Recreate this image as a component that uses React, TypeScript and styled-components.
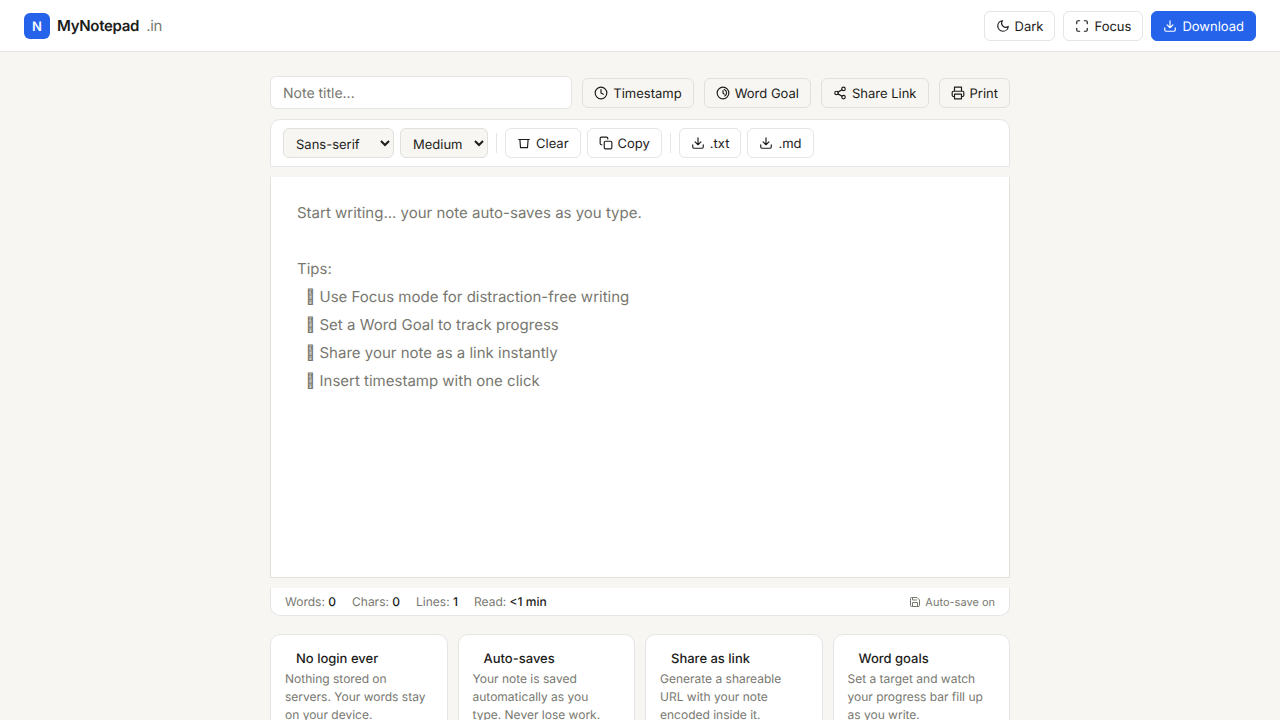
import React from "react";
import styled, { createGlobalStyle } from "styled-components";

const Global = createGlobalStyle`
  *, *::before, *::after { box-sizing: border-box; margin: 0; padding: 0; }
  body {
    background: #f7f6f2;
    color: #1c1c1a;
    font-family: Inter, "Liberation Sans", sans-serif;
    font-size: 14px;
    text-rendering: geometricPrecision;
  }
  button, input, select, textarea { font-family: inherit; color: inherit; text-rendering: inherit; }
`;

const Header = styled.header`
  display: flex;
  align-items: center;
  justify-content: space-between;
  height: 52px;
  padding: 0 24px;
  background: #fff;
  border-bottom: 1px solid #e5e5e5;
`;

const Brand = styled.a`
  display: flex;
  align-items: center;
  gap: 7px;
  color: inherit;
  font-size: 15px;
  font-weight: 600;
  letter-spacing: -0.3px;
  text-decoration: none;
`;

const Mark = styled.span`
  display: grid;
  place-items: center;
  width: 26px;
  height: 26px;
  padding-top: 2px;
  border-radius: 6px;
  background: #2563eb;
  color: #fff;
  font-size: 13px;
  line-height: 18px;
  letter-spacing: normal;
`;

const Suffix = styled.span`
  color: #787870;
  font-weight: 400;
`;

const Actions = styled.nav`
  display: flex;
  gap: 8px;
`;

const Svg = styled.svg`
  flex: none;
  fill: none;
  stroke: currentColor;
  stroke-width: 2;
  stroke-linecap: round;
  stroke-linejoin: round;
`;

type Tone = "plain" | "soft" | "primary";
const fills: Record<Tone, string> = { plain: "#fff", soft: "#f7f6f2", primary: "#2563eb" };
const edges: Record<Tone, string> = { plain: "#e5e5e5", soft: "#e0e0dd", primary: "#2563eb" };

const Button = styled.button<{ $tone?: Tone }>`
  display: inline-flex;
  align-items: center;
  gap: 5px;
  height: 30px;
  padding: 2px 11px 0;
  border: 1px solid ${(p) => edges[p.$tone ?? "plain"]};
  border-radius: 6px;
  background: ${(p) => fills[p.$tone ?? "plain"]};
  color: ${(p) => (p.$tone === "primary" ? "#fff" : "#1c1c1a")};
  font-size: 13px;
  line-height: 18px;
  white-space: nowrap;
  cursor: pointer;
  ${Svg} { margin-bottom: 2px; }
`;

const Main = styled.main`
  display: flex;
  flex-direction: column;
  gap: 10px;
  max-width: 772px;
  margin: 0 auto;
  padding: 24px 16px;
`;

const TitleRow = styled.div`
  display: flex;
  align-items: center;
  gap: 10px;
`;

const TitleInput = styled.input`
  flex: 1;
  min-width: 0;
  height: 33px;
  padding: 2px 12px 0;
  border: 1px solid #e5e5e5;
  border-radius: 6px;
  background: #fff;
  font-size: 14px;
  &::placeholder { color: #787870; }
`;

const Toolbar = styled.div`
  display: flex;
  align-items: center;
  flex-wrap: wrap;
  gap: 6px;
  padding: 8px 12px;
  border: 1px solid #e5e5e5;
  border-radius: 10px 10px 0 0;
  background: #fff;
`;

const Select = styled.select`
  height: 30px;
  padding: 3px 8px 0;
  border: 1px solid #e0e0dd;
  border-radius: 6px;
  background: #f7f6f2;
  font-size: 13px;
`;

const Divider = styled.span`
  width: 1px;
  height: 20px;
  margin: 0 2px;
  background: #e5e5e5;
`;

const Editor = styled.textarea`
  display: block;
  width: 100%;
  height: 401px;
  padding: 22px 26px;
  border: 1px solid #e0e0dd;
  border-top: 0;
  background: #fff;
  font-size: 15px;
  line-height: 28px;
  resize: none;
  outline: none;
  &::placeholder { color: #787870; }
`;

const StatusBar = styled.div`
  display: flex;
  align-items: center;
  justify-content: space-between;
  height: 28px;
  padding: 0 14px;
  border: 1px solid #e5e5e5;
  border-top: 0;
  border-radius: 0 0 10px 10px;
  background: #fff;
  color: #787870;
  font-size: 12px;
`;

const Stats = styled.div`
  display: flex;
  gap: 16px;
`;

const Value = styled.strong`
  color: #1c1c1a;
  font-weight: 500;
`;

const SaveState = styled.span`
  display: flex;
  align-items: center;
  gap: 4px;
  font-size: 11px;
`;

const Cards = styled.section`
  display: grid;
  grid-template-columns: repeat(auto-fit, minmax(160px, 1fr));
  gap: 10px;
  margin-top: 8px;
`;

const Card = styled.article`
  padding: 14px;
  border: 1px solid #e5e5e5;
  border-radius: 10px;
  background: #fff;
`;

const CardTitle = styled.h3`
  padding-left: 11px;
  font-size: 13px;
  font-weight: 500;
  line-height: 21px;
`;

const CardText = styled.p`
  color: #787870;
  font-size: 12px;
  line-height: 18px;
`;

const icons = {
  moon: <path d="M21 12.79A9 9 0 1 1 11.21 3 7 7 0 0 0 21 12.79z" />,
  focus: <path d="M8 3H5a2 2 0 0 0-2 2v3M21 8V5a2 2 0 0 0-2-2h-3M3 16v3a2 2 0 0 0 2 2h3M16 21h3a2 2 0 0 0 2-2v-3" />,
  download: <path d="M3 15v4a2 2 0 0 0 2 2h14a2 2 0 0 0 2-2v-4M7 10l5 5 5-5M12 15V3" />,
  clock: <><circle cx="12" cy="12" r="10" /><path d="M12 6v6l4 2" /></>,
  goal: <><circle cx="12" cy="12" r="10" /><path d="M12 8v4l2 2M14 6a6 6 0 0 1 1 11" /></>,
  share: <><circle cx="18" cy="5" r="3" /><circle cx="6" cy="12" r="3" /><circle cx="18" cy="19" r="3" /><path d="m8.6 13.5 6.8 4M15.4 6.5l-6.8 4" /></>,
  print: <><path d="M6 9V2h12v7M6 18H4a2 2 0 0 1-2-2v-5a2 2 0 0 1 2-2h16a2 2 0 0 1 2 2v5a2 2 0 0 1-2 2h-2" /><path d="M6 14h12v8H6z" /></>,
  clear: <path d="M3 6h18M5 6l1 14h12l1-14" />,
  copy: <><rect x="9" y="9" width="13" height="13" rx="2" /><path d="M5 15H4a2 2 0 0 1-2-2V4a2 2 0 0 1 2-2h9a2 2 0 0 1 2 2v1" /></>,
  save: <><path d="M19 21H5a2 2 0 0 1-2-2V5a2 2 0 0 1 2-2h11l5 5v11a2 2 0 0 1-2 2Z" /><path d="M17 21v-8H7v8M7 3v5h8" /></>,
};

const Icon = ({ name, size = 14 }: { name: keyof typeof icons; size?: number }) => (
  <Svg viewBox="0 0 24 24" width={size} height={size} aria-hidden="true">{icons[name]}</Svg>
);

const placeholder = [
  "Start writing... your note auto-saves as you type.",
  "",
  "Tips:",
  "  \uEB77 Use Focus mode for distraction-free writing",
  "  \uEB77 Set a Word Goal to track progress",
  "  \uEB77 Share your note as a link instantly",
  "  \uEB77 Insert timestamp with one click",
].join("\n");

const features = [
  ["No login ever", "Nothing stored on servers. Your words stay on your device."],
  ["Auto-saves", "Your note is saved automatically as you type. Never lose work."],
  ["Share as link", "Generate a shareable URL with your note encoded inside it."],
  ["Word goals", "Set a target and watch your progress bar fill up as you write."],
];

const stats = [["Words", "0"], ["Chars", "0"], ["Lines", "1"], ["Read", "<1 min"]];

export default function App() {
  return (
    <>
      <Global />
      <Header>
        <Brand href="#"><Mark>N</Mark>MyNotepad <Suffix>.in</Suffix></Brand>
        <Actions>
          <Button><Icon name="moon" />Dark</Button>
          <Button><Icon name="focus" />Focus</Button>
          <Button $tone="primary"><Icon name="download" />Download</Button>
        </Actions>
      </Header>
      <Main>
        <TitleRow>
          <TitleInput placeholder="Note title..." aria-label="Note title" />
          <Button $tone="soft"><Icon name="clock" />Timestamp</Button>
          <Button $tone="soft"><Icon name="goal" />Word Goal</Button>
          <Button $tone="soft"><Icon name="share" />Share Link</Button>
          <Button $tone="soft"><Icon name="print" />Print</Button>
        </TitleRow>
        <Toolbar>
          <Select aria-label="Font" defaultValue="Sans-serif">
            <option>Sans-serif</option><option>Serif</option><option>Monospace</option>
          </Select>
          <Select aria-label="Text size" defaultValue="Medium">
            <option>Small</option><option>Medium</option><option>Large</option>
          </Select>
          <Divider />
          <Button><Icon name="clear" />Clear</Button>
          <Button><Icon name="copy" />Copy</Button>
          <Divider />
          <Button><Icon name="download" />.txt</Button>
          <Button><Icon name="download" />.md</Button>
        </Toolbar>
        <Editor placeholder={placeholder} aria-label="Note" />
        <StatusBar>
          <Stats>
            {stats.map(([label, value]) => (
              <span key={label}>{label}: <Value>{value}</Value></span>
            ))}
          </Stats>
          <SaveState><Icon name="save" size={12} />Auto-save on</SaveState>
        </StatusBar>
        <Cards>
          {features.map(([title, text]) => (
            <Card key={title}>
              <CardTitle>{title}</CardTitle>
              <CardText>{text}</CardText>
            </Card>
          ))}
        </Cards>
      </Main>
    </>
  );
}
